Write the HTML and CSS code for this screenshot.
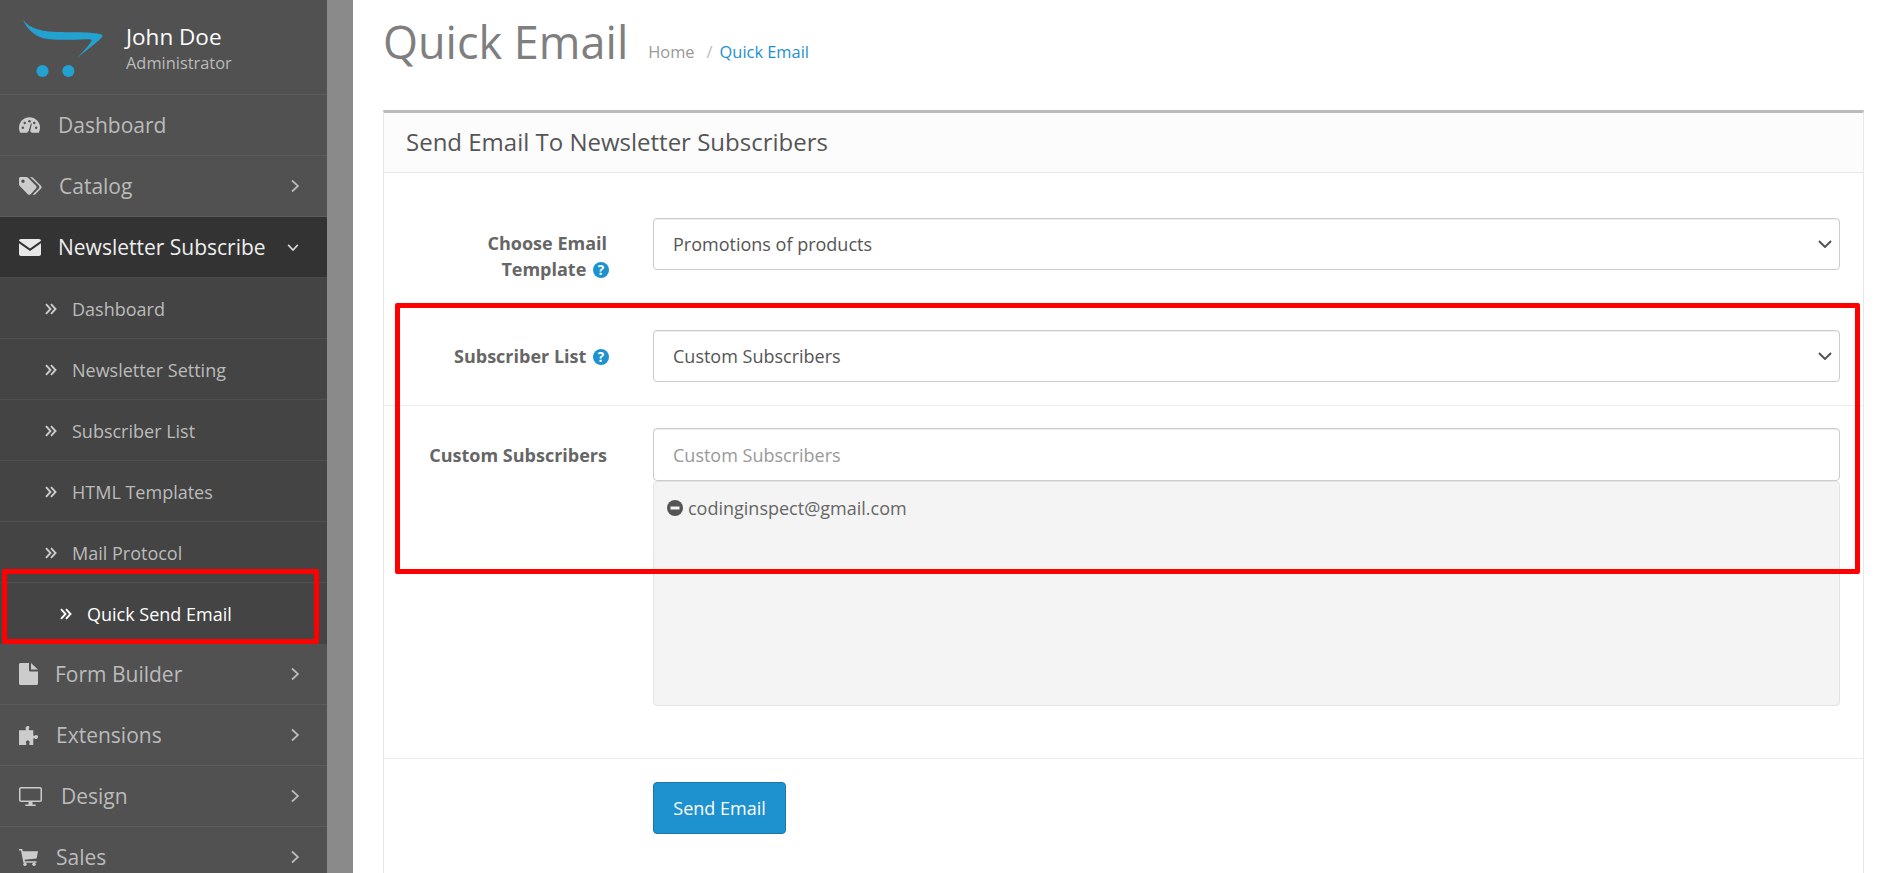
FILE: index.html
```html
<!DOCTYPE html>
<html lang="en">
<head>
<meta charset="utf-8">
<title>Quick Email</title>
<link rel="stylesheet" href="styles.css">
</head>
<body>
<svg class="defs" aria-hidden="true">
  <symbol id="chev-r" viewBox="0 0 10 16"><path d="M2 2.5 8 8l-6 5.500" fill="none" stroke="currentColor" stroke-width="1.700"/></symbol>
  <symbol id="chev-d" viewBox="0 0 16 10"><path d="M2.500 2 8 8l5.500-6" fill="none" stroke="currentColor" stroke-width="1.700"/></symbol>
  <symbol id="dbl" viewBox="0 0 12 12"><path d="M1 1.200 5.500 6 1 10.800M6 1.200 10.500 6 6 10.800" fill="none" stroke="currentColor" stroke-width="1.900"/></symbol>
</svg>
<div class="app">
  <aside class="sidebar">
    <div class="profile">
      <svg class="logo" viewBox="0 0 84 60"><path d="M1 1C8 11 22 13 36 13.500 50 14 72 13 81 16 83 17 83 18 81 20 74 27 64 33 56 41 62 34 69 27 71 23 72 21 70 21 66 21 46 22 32 22 22 20 12 17 5 10 1 1Z" fill="#23a1d1"/><circle cx="21" cy="53.500" r="6.200" fill="#23a1d1"/><circle cx="47.500" cy="53.500" r="6.200" fill="#23a1d1"/></svg>
      <div class="who">
        <div class="name">John Doe</div>
        <div class="role">Administrator</div>
      </div>
    </div>
    <nav>
      <ul class="menu">
        <li class="item">
          <svg class="ico w-dash" viewBox="0 0 22 16"><path d="M11 0C5 0 0 4.800 0 11c0 1.800.4 3.400 1.200 5h19.600c.8-1.600 1.200-3.200 1.200-5C22 4.800 17 0 11 0Z" fill="currentColor"/><g fill="#515151"><circle cx="4" cy="11" r="1.300"/><circle cx="6" cy="6" r="1.300"/><circle cx="11" cy="4" r="1.300"/><circle cx="16" cy="6" r="1.300"/><circle cx="18" cy="11" r="1.300"/><path d="M10 14.500 12.500 6.500l1 .3-1.800 7.800a2 2 0 1 1-1.700-.1Z"/></g></svg>
          <span>Dashboard</span>
        </li>
        <li class="item">
          <svg class="ico w-tag" viewBox="0 0 23 18"><path d="M1.500 0H7c.8 0 1.500.3 2 .8l8 8c.8.800.8 2 0 2.800l-5.400 5.600c-.8.800-2 .8-2.800 0l-8-8.200C.3 8.500 0 7.800 0 7V1.500C0 .7.700 0 1.500 0ZM4 2.500A1.700 1.700 0 1 0 4 5.900 1.700 1.700 0 0 0 4 2.500Z" fill="currentColor" fill-rule="evenodd"/><path d="M11 0h1c.8 0 1.500.3 2 .8l8 8c.8.800.8 2 0 2.800L16.400 17.200c-.8.800-1.800.8-2.600.2l6-6c.8-.8.800-2 0-2.800Z" fill="currentColor"/></svg>
          <span>Catalog</span>
          <svg class="chev"><use href="#chev-r"/></svg>
        </li>
        <li class="item open">
          <svg class="ico w-env" viewBox="0 0 22 17"><path d="M2 0h18c1.100 0 2 .8 2 1.800L11 9.500 0 1.800C0 .8.900 0 2 0Z" fill="currentColor"/><path d="M0 4.200 11 12l11-7.800V15c0 1.100-.9 2-2 2H2c-1.100 0-2-.9-2-2Z" fill="currentColor"/></svg>
          <span>Newsletter Subscribe</span>
          <svg class="chev-down"><use href="#chev-d"/></svg>
        </li>
        <li class="sub"><svg class="dbl"><use href="#dbl"/></svg><span>Dashboard</span></li>
        <li class="sub"><svg class="dbl"><use href="#dbl"/></svg><span>Newsletter Setting</span></li>
        <li class="sub"><svg class="dbl"><use href="#dbl"/></svg><span>Subscriber List</span></li>
        <li class="sub"><svg class="dbl"><use href="#dbl"/></svg><span>HTML Templates</span></li>
        <li class="sub"><svg class="dbl"><use href="#dbl"/></svg><span>Mail Protocol</span></li>
        <li class="sub active"><svg class="dbl"><use href="#dbl"/></svg><span>Quick Send Email</span></li>
        <li class="item">
          <svg class="ico w-file" viewBox="0 0 19 22"><path d="M1.500 0H10v7c0 .8.700 1.500 1.500 1.500H19v12c0 .8-.7 1.500-1.500 1.500h-16C.7 22 0 21.300 0 20.500v-19C0 .7.700 0 1.500 0Z" fill="currentColor"/><path d="M12 0 19 6.500h-7Z" fill="currentColor"/></svg>
          <span>Form Builder</span>
          <svg class="chev"><use href="#chev-r"/></svg>
        </li>
        <li class="item">
          <svg class="ico w-puz" viewBox="0 0 21 20"><path d="M7.500 1.500C7.500.600 8.300 0 9.200 0s1.700.6 1.700 1.500c0 .9-.7 1.300-.7 2.200 0 .5.400.8 1 .8H15v5c0 .5.300.9.800.9.800 0 1.300-.8 2.200-.8 1.200 0 2 .9 2 2s-.8 2-2 2c-.9 0-1.400-.8-2.200-.8-.5 0-.8.400-.8.900V20h-3.500c-.6 0-.9-.5-.9-1 0-.8.600-1.200.6-2 0-1-.9-1.700-2-1.700s-2 .7-2 1.700c0 .8.600 1.200.6 2 0 .5-.3 1-.9 1H0V4.500h6.300c.6 0 1-.3 1-.8 0-.9-.8-1.300-.8-2.200Z" fill="currentColor"/></svg>
          <span>Extensions</span>
          <svg class="chev"><use href="#chev-r"/></svg>
        </li>
        <li class="item">
          <svg class="ico w-desk" viewBox="0 0 23 19"><path d="M2 0h19c1.100 0 2 .9 2 2v11c0 1.100-.9 2-2 2H2c-1.100 0-2-.9-2-2V2C0 .9.900 0 2 0Zm0 1.500c-.3 0-.5.200-.5.500v11c0 .3.200.5.500.5h19c.3 0 .5-.2.500-.5V2c0-.3-.2-.5-.5-.5Z" fill="currentColor" fill-rule="evenodd"/><path d="M9.500 15h4v2.400h3.200V19H6.300v-1.600h3.200Z" fill="currentColor"/></svg>
          <span>Design</span>
          <svg class="chev"><use href="#chev-r"/></svg>
        </li>
        <li class="item">
          <svg class="ico w-cart" viewBox="0 0 19 17"><path d="M0 0h3.200l.6 2.200H19l-1.400 7.300-12 1.200.3 1.500h11.600v1.600H4.400L2 1.600H0Z" fill="currentColor"/><circle cx="6" cy="15.300" r="1.700" fill="currentColor"/><circle cx="15" cy="15.300" r="1.700" fill="currentColor"/></svg>
          <span>Sales</span>
          <svg class="chev"><use href="#chev-r"/></svg>
        </li>
      </ul>
    </nav>
  </aside>
  <div class="gutter"></div>
  <main class="content">
    <header class="page-head">
      <h1>Quick Email</h1>
      <ol class="crumbs">
        <li>Home</li>
        <li class="sep">/</li>
        <li class="current">Quick Email</li>
      </ol>
    </header>
    <section class="panel">
      <h2 class="panel-title">Send Email To Newsletter Subscribers</h2>
      <form class="panel-body">
        <div class="row first">
          <label class="lbl">Choose Email<br>Template <span class="help">?</span></label>
          <div class="field"><select class="ctl"><option>Promotions of products</option></select></div>
        </div>
        <div class="row second">
          <label class="lbl">Subscriber List <span class="help">?</span></label>
          <div class="field"><select class="ctl"><option>Custom Subscribers</option></select></div>
        </div>
        <div class="row third">
          <label class="lbl">Custom Subscribers</label>
          <div class="field">
            <input class="ctl field-input" type="text" placeholder="Custom Subscribers">
            <div class="well">
              <div class="chip"><svg class="minus" viewBox="0 0 16 16"><circle cx="8" cy="8" r="8" fill="#555"/><rect x="3.500" y="6.500" width="9" height="3" fill="#f4f4f4"/></svg>codinginspect@gmail.com</div>
            </div>
          </div>
        </div>
        <div class="row actions">
          <div class="lbl"></div>
          <div class="field"><button class="btn" type="button">Send Email</button></div>
        </div>
      </form>
    </section>
  </main>
</div>
<div class="mark mark-menu"></div>
<div class="mark mark-form"></div>
</body>
</html>
```
FILE: styles.css
```css
* { box-sizing: border-box; }
html, body { margin: 0; height: 873px; overflow: hidden; background: #fff; }
body { font-family: "Open Sans", sans-serif; font-size: 16px; color: #555; position: relative; }
.defs { display: none; }
.app { display: flex; height: 873px; }

.sidebar { width: 327px; flex: none; background: #515151; color: #bbb; }
.profile { height: 95px; display: flex; align-items: flex-start; padding: 18px 0 0 22px; border-bottom: 1px solid #5c5c5c; }
.logo { width: 82px; height: 60px; flex: none; }
.who { margin-left: 22px; margin-top: 5px; }
.name { font-size: 22.500px; line-height: 28px; color: #fff; }
.role { font-size: 16.400px; line-height: 22px; color: #bbb; margin-top: 1px; }

.menu { list-style: none; margin: 0; padding: 0; }
.item { height: 61px; display: flex; align-items: center; padding-left: 19px; font-size: 21px; border-bottom: 1px solid #5c5c5c; }
.item > span { flex: 1; }
.ico { flex: none; color: #ccc; }
.w-dash { width: 21px; height: 16px; margin-right: 18px; }
.w-tag { width: 23px; height: 18px; margin-right: 17px; }
.w-env { width: 22px; height: 17px; margin-right: 17px; }
.w-file { width: 19px; height: 22px; margin-right: 17px; }
.w-puz { width: 20px; height: 19px; margin-right: 17px; }
.w-desk { width: 23px; height: 19px; margin-right: 19px; }
.w-cart { width: 19px; height: 17px; margin-right: 18px; }
.chev { width: 10px; height: 16px; margin-right: 27px; color: #bbb; flex: none; }
.chev-down { width: 14px; height: 9px; margin-right: 27px; color: #ddd; flex: none; }
.open { background: #333; color: #eee; border-bottom-color: #4a4a4a; }
.open .ico { color: #e8e8e8; }

.sub { height: 61px; display: flex; align-items: center; padding: 1px 0 0 45px; background: #444; font-size: 18px; border-bottom: 1px solid #505050; }
.dbl { width: 12px; height: 12px; margin-right: 15px; flex: none; color: #ccc; }
.active { padding-left: 60px; color: #fff; border-bottom: 0; }
.active .dbl { color: #fff; margin-right: 15px; }

.gutter { width: 26px; flex: none; background: #8a8a8a; }

.content { flex: 1; min-width: 0; padding: 0 18px 0 30px; }
.page-head { height: 110px; display: flex; align-items: flex-start; }
h1 { margin: 15px 0 0; font-size: 45px; line-height: 54px; font-weight: 400; color: #7f7f7f; }
.crumbs { list-style: none; display: flex; margin: 40px 0 0 20px; padding: 0; font-size: 16.400px; line-height: 24px; color: #999; }
.sep { margin: 0 7px 0 12px; color: #bbb; }
.current { color: #1e91cf; }

.panel { border: 1px solid #e8e8e8; border-top: 3px solid #bbb; border-bottom: 0; height: 800px; }
.panel-title { margin: 0; height: 60px; padding: 0 22px; font-size: 24px; line-height: 58px; font-weight: 400; color: #555; background: #fcfcfc; border-bottom: 1px solid #e8e8e8; }
.panel-body { display: block; padding: 0 23px; }
.row { display: flex; gap: 46px; padding: 45px 0 0; }
.first { height: 111px; }
.second { height: 122px; padding-top: 46px; border-bottom: 1px solid #ededed; margin: 0 -23px; padding-left: 23px; padding-right: 23px; }
.third { height: 353px; padding-top: 22px; border-bottom: 1px solid #ededed; margin: 0 -23px; padding-left: 23px; padding-right: 23px; }
.actions { padding-top: 23px; }
.lbl { width: 200px; flex: none; text-align: right; font-weight: 700; font-size: 18px; line-height: 26.400px; color: #666; }
.first .lbl { padding-top: 12px; }
.second .lbl { padding-top: 13px; }
.third .lbl { padding-top: 14px; }
.field { flex: 1; min-width: 0; }
.ctl { display: block; width: 100%; height: 52px; padding: 0 13px 0 19px; font: 18px "Open Sans", sans-serif; color: #555; background-color: #fff; border: 1px solid #ccc; border-radius: 4px; box-shadow: inset 0 1px 1px rgba(0,0,0,.075); }
.field-input { height: 53px; }
select.ctl { appearance: none; background-image: url("data:image/svg+xml,%3Csvg xmlns='http://www.w3.org/2000/svg' width='14' height='8' viewBox='0 0 14 8'%3E%3Cpath d='M1 1l6 6 6-6' fill='none' stroke='%23555' stroke-width='2'/%3E%3C/svg%3E"); background-repeat: no-repeat; background-position: right 7px center; }
.ctl::placeholder { color: #999; opacity: 1; }
.well { height: 225px; padding: 14px 13px; background: #f4f4f4; border: 1px solid #e3e3e3; border-radius: 4px; line-height: 24px; }
.chip { display: flex; align-items: center; gap: 5px; font-size: 18px; color: #666; }
.minus { width: 16px; height: 16px; flex: none; }
.help { display: inline-block; width: 16px; height: 16px; margin: 0 -2px 0 2px; border-radius: 50%; background: #1e91cf; color: #fff; font-size: 13.500px; font-weight: 700; line-height: 16px; text-align: center; vertical-align: 1px; }
.btn { width: 133px; height: 52px; font: 18px "Open Sans", sans-serif; color: #fff; background: #1e91cf; border: 1px solid #1978ab; border-radius: 4px; }

.mark { position: absolute; border: 5px solid #f00; border-radius: 2px; pointer-events: none; }
.mark-menu { left: 2px; top: 569px; width: 317px; height: 75px; }
.mark-form { left: 395px; top: 303px; width: 1465px; height: 271px; }
```
